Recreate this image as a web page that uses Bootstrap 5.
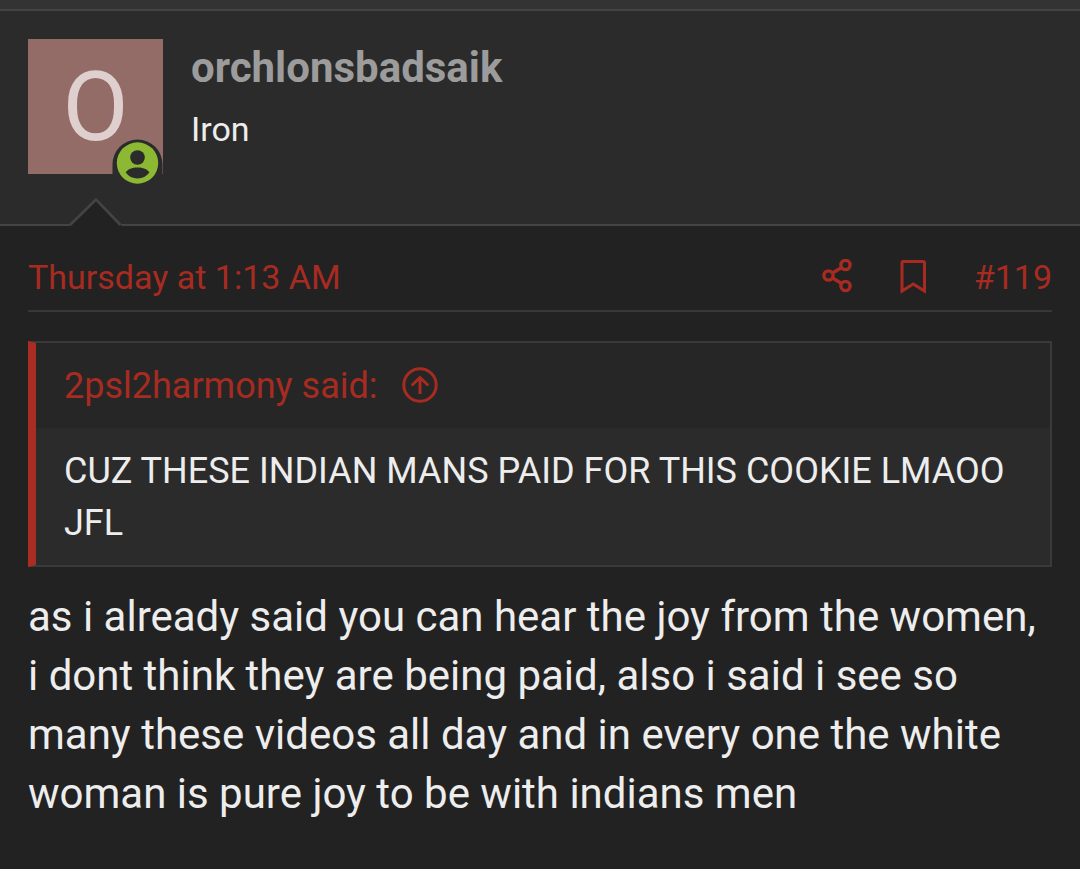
<!DOCTYPE html>
<html lang="en">
<head>
<meta charset="utf-8">
<meta name="viewport" content="width=device-width, initial-scale=1">
<title>Thread post #119</title>
<link href="https://cdn.jsdelivr.net/npm/bootstrap@5.3.0/dist/css/bootstrap.min.css" rel="stylesheet">
<style>
  body { background: #222; color: #ededed; font-family: Roboto, sans-serif; }
  a { color: #a82b22; text-decoration: none; }
  a:hover { color: #c9392f; }
  svg { display: block; fill: none; stroke: currentColor; }
  .thread-bar { height: 11px; background: #333; border-bottom: 2px solid #444; }
  .post-user { gap: 28px; padding: 28px 28px 50px; background: #2b2b2b; border-bottom: 2px solid #444; }
  .avatar { width: 135px; height: 135px; background: #936b67; color: #dfd0cf; font-size: 96px; line-height: 1; }
  .online { right: 0; bottom: -12px; }
  .arrow { left: 69px; bottom: -2px; }
  .user-name { font-size: 42px; line-height: 58px; font-weight: 700; color: #9c9c9c; }
  .user-title { font-size: 34px; line-height: 40px; margin-top: 12px; }
  .post-main { padding: 28px; }
  .post-head { font-size: 34px; line-height: 46px; padding-bottom: 10px; border-bottom: 2px solid #383838; }
  .post-actions { gap: 44px; }
  .quote { margin: 29px 0 20px; border: 2px solid #3a3a3a; border-left: 8px solid #ab2c23; font-size: 36px; line-height: 52px; background: #262626; }
  .quote-head { padding: 17px 28px 16px; }
  .quote-link { gap: 23px; }
  .quote-text { padding: 17px 28px 16px; background: #2b2b2b; }
  .post-text { font-size: 42px; line-height: 59px; }
</style>
</head>
<body>
<div class="thread-bar"></div>
<article>
  <header class="post-user d-flex position-relative">
    <a href="#" class="avatar d-flex align-items-center justify-content-center position-relative flex-shrink-0">
      <span>O</span>
      <svg class="online position-absolute" width="51" height="47" viewBox="0 0 51 47" role="img" aria-label="Online now">
        <path d="M.5 47V25.500A25 25 0 0 1 50.500 25.500V47Z" fill="#2b2b2b" stroke="none"/>
        <circle cx="25.500" cy="24" r="20.700" fill="#8cb833" stroke="none"/>
        <circle cx="25.500" cy="18.500" r="7.300" fill="#2b2b2b" stroke="none"/>
        <path d="M13.700 33.500C16 30 20 28.600 25.500 28.600S35 30 37.400 33.500C34.500 37.400 30.500 39.400 25.500 39.400S16.500 37.400 13.700 33.500Z" fill="#2b2b2b" stroke="none"/>
      </svg>
    </a>
    <div>
      <h1 class="m-0 user-name"><a href="#" class="text-reset">orchlonsbadsaik</a></h1>
      <div class="user-title">Iron</div>
    </div>
    <svg class="arrow position-absolute" width="54" height="29" viewBox="0 0 54 29" aria-hidden="true">
      <path d="M1 29 27 3 53 29Z" fill="#222" stroke="none"/>
      <path d="M1 28 27 2.500 51.500 28" stroke="#444" stroke-width="2.600"/>
    </svg>
  </header>
  <div class="post-main">
    <div class="post-head d-flex justify-content-between align-items-center">
      <a href="#"><time>Thursday at 1:13 AM</time></a>
      <div class="post-actions d-flex align-items-center">
        <a href="#" aria-label="Share">
          <svg width="34" height="36" viewBox="0 0 34 36" stroke-width="3.400">
            <circle cx="8.500" cy="16.500" r="4.600"/><circle cx="25.500" cy="6" r="4.600"/><circle cx="25.500" cy="27" r="4.600"/>
            <path d="M12.500 14 21.300 8.700M12.500 19 21.300 24.300"/>
          </svg>
        </a>
        <a href="#" aria-label="Bookmark">
          <svg width="32" height="36" viewBox="0 0 32 36" stroke-width="3">
            <path d="M4 32V4Q4 2.500 5.500 2.500H25Q26.500 2.500 26.500 4V32L15.250 25Z"/>
          </svg>
        </a>
        <a href="#">#119</a>
      </div>
    </div>
    <blockquote class="quote">
      <div class="quote-head d-flex align-items-center">
        <a href="#" class="quote-link d-flex align-items-center">2psl2harmony said:
          <svg width="38" height="38" viewBox="0 0 38 38" stroke-width="3" aria-hidden="true">
            <circle cx="19" cy="18" r="16.200"/>
            <path d="M19 27V11M10.700 18.500 19 10.500 27.300 18.500"/>
          </svg>
        </a>
      </div>
      <div class="quote-text">CUZ THESE INDIAN MANS PAID FOR THIS COOKIE LMAOO JFL</div>
    </blockquote>
    <p class="post-text m-0">as i already said you can hear the joy from the women, i dont think they are being paid, also i said i see so many these videos all day and in every one the white woman is pure joy to be with indians men</p>
  </div>
</article>
<script src="https://cdn.jsdelivr.net/npm/bootstrap@5.3.0/dist/js/bootstrap.bundle.min.js"></script>
</body>
</html>
